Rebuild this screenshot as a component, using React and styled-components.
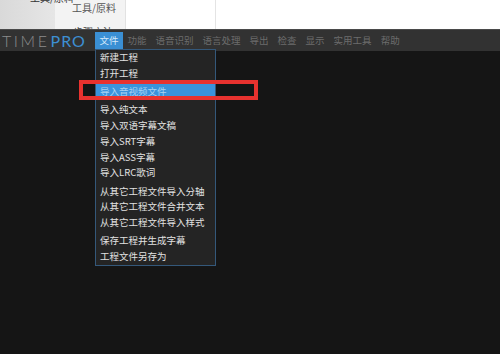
import React from "react";
import styled, { createGlobalStyle } from "styled-components";

const GlobalStyle = createGlobalStyle`
  html, body {
    margin: 0;
    padding: 0;
    background: #151515;
  }
  body {
    font-family: "Noto Sans CJK SC", "Noto Sans", sans-serif;
  }
`;

// menu data: groups of items, one highlighted
const fileMenu = [
  ["新建工程", "打开工程"],
  ["导入音视频文件"],
  ["导入纯文本", "导入双语字幕文稿", "导入SRT字幕", "导入ASS字幕", "导入LRC歌词"],
  ["从其它工程文件导入分轴", "从其它工程文件合并文本", "从其它工程文件导入样式"],
  ["保存工程并生成字幕", "工程文件另存为"],
];

const topMenus = ["功能", "语音识别", "语言处理", "导出", "检查", "显示", "实用工具", "帮助"];

function App() {
  return (
    <>
      <GlobalStyle />
      <Page>
        <TopStrip>
          <LeftPane>
            <CutCaption>工具/原料</CutCaption>
          </LeftPane>
          <MidPane>
            <Caption>工具/原料</Caption>
            <Rule />
            <Peek>步骤方法</Peek>
          </MidPane>
          <BlankPane $width={89} />
          <BlankPane />
        </TopStrip>

        <MenuBar>
          <Logo>
            <span className="time">ETIME</span>
            <span className="pro">PRO</span>
          </Logo>
          <MenuWrap>
            <MenuItem $active>
              文件
              <Dropdown>
                {fileMenu.map((group, gi) => (
                  <Group key={gi}>
                    {group.map((label) => (
                      <Row key={label} $hot={label === "导入音视频文件"}>
                        {label}
                      </Row>
                    ))}
                  </Group>
                ))}
                <Callout />
              </Dropdown>
            </MenuItem>
            {topMenus.map((m) => (
              <MenuItem key={m}>{m}</MenuItem>
            ))}
          </MenuWrap>
        </MenuBar>

        <Workspace />
      </Page>
    </>
  );
}

const Page = styled.div`
  width: 500px;
  height: 354px;
  overflow: hidden;
  display: flex;
  flex-direction: column;
  background: #151515;
`;

const TopStrip = styled.div`
  height: 29px;
  display: flex;
  background: #fff;
  flex-shrink: 0;
  overflow: hidden;
`;

const LeftPane = styled.div`
  width: 55px;
  background: linear-gradient(90deg, #d9d9d9 0%, #e6e6e6 100%);
  position: relative;
  z-index: 1;
`;

const CutCaption = styled.div`
  margin: -8px 0 0 30px;
  font-size: 10px;
  line-height: 12px;
  color: #333;
  white-space: nowrap;
`;

const MidPane = styled.div`
  width: 68px;
  background: #f3f3f3;
  border-right: 1px solid #e2e2e2;
  display: flex;
  flex-direction: column;
  align-items: flex-start;
  padding-left: 2px;
  overflow: hidden;
`;

const Caption = styled.div`
  margin: 2px 0 0 15px;
  font-size: 10px;
  line-height: 12px;
  color: #555;
  white-space: nowrap;
`;

const Rule = styled.div`
  width: 63px;
  height: 1px;
  background: #e2e2e2;
  margin-top: 5px;
`;

const Peek = styled.div`
  margin: 7px 0 0 16px;
  font-size: 10px;
  line-height: 12px;
  color: #444;
  white-space: nowrap;
`;

const BlankPane = styled.div`
  ${(p) => (p.$width ? `width: ${p.$width}px;` : "flex: 1;")}
  background: #fff;
  border-right: ${(p) => (p.$width ? "1px solid #e4e4e4" : "none")};
`;

const MenuBar = styled.div`
  height: 21px;
  flex-shrink: 0;
  display: flex;
  align-items: center;
  background: #323232;
  border-top: 1px solid #4a4a4a;
  position: relative;
  z-index: 2;
`;

const Logo = styled.div`
  display: flex;
  align-items: center;
  margin-left: -10px;
  width: 105px;
  overflow: hidden;
  font-family: "Lato", "Open Sans", sans-serif;
  font-size: 16px;
  line-height: 20px;
  .time {
    color: #8c8c8c;
    font-weight: 300;
    letter-spacing: 2.6px;
  }
  .pro {
    color: #3d8fd2;
    font-weight: 400;
    letter-spacing: 1px;
    margin-left: 1px;
  }
`;

const MenuWrap = styled.div`
  display: flex;
  align-items: stretch;
  height: 17px;
`;

const MenuItem = styled.div`
  position: relative;
  padding: 0 4.5px;
  font-size: 9.5px;
  line-height: 17px;
  white-space: nowrap;
  color: ${(p) => (p.$active ? "#d4e9fa" : "#6c6c6c")};
  background: ${(p) => (p.$active ? "#3a8fd4" : "transparent")};
`;

const Dropdown = styled.div`
  position: absolute;
  top: 100%;
  left: 0;
  width: 119px;
  background: #242424;
  border: 1px solid #34587a;
  display: flex;
  flex-direction: column;
  gap: 2.7px;
`;

const Group = styled.div`
  display: flex;
  flex-direction: column;
`;

const Row = styled.div`
  height: 15.7px;
  line-height: 15.7px;
  padding-left: 4px;
  font-size: 9.5px;
  color: ${(p) => (p.$hot ? "#a9d2f2" : "#e2e2e2")};
  background: ${(p) => (p.$hot ? "#3a93dc" : "transparent")};
`;

// red annotation box drawn over the highlighted entry
const Callout = styled.div`
  position: absolute;
  left: -17px;
  top: 30px;
  width: 171px;
  height: 12px;
  border: 4px solid #e8322f;
  pointer-events: none;
`;

const Workspace = styled.div`
  flex: 1;
  background: #151515;
`;

export default App;
